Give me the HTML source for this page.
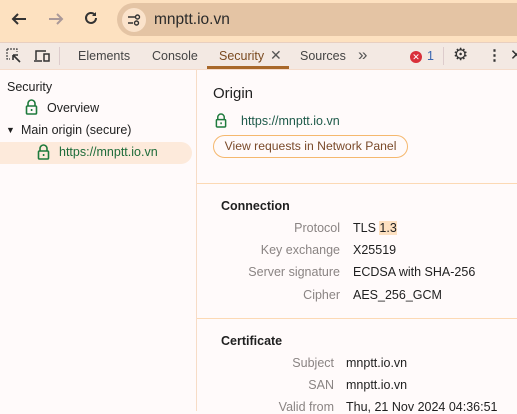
<!DOCTYPE html>
<html><head><style>
*{margin:0;padding:0;box-sizing:border-box}
body{width:517px;height:411px;overflow:hidden;font-family:"Liberation Sans",sans-serif;font-size:12.5px;color:#1f1f1f;background:#fffafa;position:relative}
.a{position:absolute;white-space:nowrap}
.top{position:absolute;left:0;top:0;width:517px;height:42px;background:#fde1c0}
.addr{position:absolute;left:117px;top:3px;width:420px;height:33px;border-radius:17px;background:#e4c4a4}
.tabs{position:absolute;left:0;top:42px;width:517px;height:28px;background:#f3e9e3;border-top:1px solid #e8cfc0;border-bottom:1px solid #f5dccb}
.lbl{color:#8a8483;text-align:right;width:140px}
.g{color:#1e6c3a}
</style></head><body>
<div class="top"></div>
<div class="addr"></div>
<svg class="a" style="left:10px;top:11px" width="18" height="16" viewBox="0 0 18 16"><path d="M16 8H3M8 3L3 8l5 5" stroke="#333" stroke-width="2" fill="none"/></svg>
<svg class="a" style="left:47px;top:11px" width="18" height="16" viewBox="0 0 18 16"><path d="M2 8h13M10 3l5 5-5 5" stroke="#a99" stroke-width="2" fill="none"/></svg>
<svg class="a" style="left:83px;top:10px" width="16" height="16" viewBox="0 0 16 16"><path d="M13 8a5 5 0 1 1-1.5-3.6" stroke="#333" stroke-width="2" fill="none"/><path d="M13 2v4h-4z" fill="#333"/></svg>
<div class="a" style="left:122px;top:8px;width:24px;height:24px;border-radius:12px;background:#fbe3cb"></div>
<svg class="a" style="left:127px;top:13px" width="14" height="14" viewBox="0 0 14 14"><path d="M1 4h7M1 10h5" stroke="#333" stroke-width="1.6"/><circle cx="10.5" cy="4" r="2" fill="none" stroke="#333" stroke-width="1.4"/><circle cx="9.5" cy="10" r="2" fill="none" stroke="#333" stroke-width="1.4"/></svg>
<div class="a" style="left:154px;top:11px;font-size:15.5px;color:#2a2a2a">mnptt.io.vn</div>
<div class="tabs"></div>
<svg class="a" style="left:6px;top:48px" width="16" height="16" viewBox="0 0 16 16"><path d="M1 1h10v3M1 1v10h3" stroke="#444" stroke-width="1.2" stroke-dasharray="2 1" fill="none"/><path d="M7 7l7 7M7 7h5M7 7v5" stroke="#333" stroke-width="1.6" fill="none"/></svg>
<svg class="a" style="left:33px;top:48px" width="18" height="16" viewBox="0 0 18 16"><path d="M3 12V3h10" stroke="#333" stroke-width="1.5" fill="none"/><path d="M1 13h8" stroke="#333" stroke-width="1.5"/><rect x="11" y="6" width="5" height="7" stroke="#333" stroke-width="1.5" fill="none"/></svg>
<div class="a" style="left:59px;top:47px;width:1px;height:18px;background:#dcc"></div>
<div class="a" style="left:78px;top:49px;color:#444">Elements</div>
<div class="a" style="left:152px;top:49px;color:#444">Console</div>
<div class="a" style="left:219px;top:49px;color:#7a4a20">Security</div>
<div class="a" style="left:270px;top:47px;font-size:14px;color:#555">✕</div>
<div class="a" style="left:207px;top:66px;width:82px;height:3px;background:#a8682a"></div>
<div class="a" style="left:300px;top:49px;color:#444">Sources</div>
<div class="a" style="left:358px;top:45px;font-size:17px;color:#555">»</div>
<div class="a" style="left:410px;top:51px;width:12px;height:12px;border-radius:6px;background:#d9303a;color:#fff;font-size:9px;line-height:12px;text-align:center">✕</div>
<div class="a" style="left:427px;top:49px;color:#3a66b0">1</div>
<div class="a" style="left:443px;top:47px;width:1px;height:18px;background:#dcc"></div>
<div class="a" style="left:453px;top:45px;font-size:17px;color:#333">⚙</div>
<div class="a" style="left:487px;top:46px;font-size:15px;color:#333;font-weight:bold">⋮</div>
<div class="a" style="left:510px;top:46px;font-size:15px;color:#333">✕</div>
<div class="a" style="left:196px;top:70px;width:1px;height:341px;background:#f7dcc6"></div>
<div class="a" style="left:7px;top:80px">Security</div>
<svg class="a" style="left:25px;top:99px" width="13" height="16" viewBox="0 0 13 16"><path d="M3 7V4.5a3.5 3.5 0 0 1 7 0V7" stroke="#1e7a3c" stroke-width="1.6" fill="none"/><rect x="1.5" y="7" width="10" height="8" rx="1" stroke="#1e7a3c" stroke-width="1.6" fill="none"/><rect x="5.8" y="10" width="1.6" height="2" fill="#1e7a3c"/></svg>
<div class="a" style="left:47px;top:101px">Overview</div>
<div class="a" style="left:6px;top:125px;font-size:9px">▼</div>
<div class="a" style="left:21px;top:123px">Main origin (secure)</div>
<div class="a" style="left:0;top:142px;width:192px;height:22px;border-radius:0 11px 11px 0;background:#fdeadb"></div>
<svg class="a" style="left:37px;top:144px" width="13" height="16" viewBox="0 0 13 16"><path d="M3 7V4.5a3.5 3.5 0 0 1 7 0V7" stroke="#1e7a3c" stroke-width="1.6" fill="none"/><rect x="1.5" y="7" width="10" height="8" rx="1" stroke="#1e7a3c" stroke-width="1.6" fill="none"/><rect x="5.8" y="10" width="1.6" height="2" fill="#1e7a3c"/></svg>
<div class="a g" style="left:59px;top:145px">https://mnptt.io.vn</div>
<div class="a" style="left:213px;top:85px;font-size:15px">Origin</div>
<svg class="a" style="left:215px;top:113px" width="12" height="15" viewBox="0 0 13 16"><path d="M3 7V4.5a3.5 3.5 0 0 1 7 0V7" stroke="#1e7a3c" stroke-width="1.6" fill="none"/><rect x="1.5" y="7" width="10" height="8" rx="1" stroke="#1e7a3c" stroke-width="1.6" fill="none"/><rect x="5.8" y="10" width="1.6" height="2" fill="#1e7a3c"/></svg>
<div class="a" style="left:241px;top:114px;color:#1e5a4a">https://mnptt.io.vn</div>
<div class="a" style="left:213px;top:135px;width:195px;height:23px;border:1px solid #f5b86e;border-radius:12px;color:#7a4a2a;font-size:12.2px;line-height:21px;text-align:center">View requests in Network Panel</div>
<div class="a" style="left:197px;top:183px;width:320px;height:1px;background:#fcd9b4"></div>
<div class="a" style="left:221px;top:199px;font-weight:bold">Connection</div>
<div class="a lbl" style="left:200px;top:221px">Protocol</div>
<div class="a" style="left:353px;top:221px">TLS <span style="background:#fde0c0">1.3</span></div>
<div class="a lbl" style="left:200px;top:243px">Key exchange</div><div class="a" style="left:353px;top:243px">X25519</div>
<div class="a lbl" style="left:200px;top:265px">Server signature</div><div class="a" style="left:353px;top:265px">ECDSA with SHA-256</div>
<div class="a lbl" style="left:200px;top:288px">Cipher</div><div class="a" style="left:353px;top:288px">AES_256_GCM</div>
<div class="a" style="left:197px;top:318px;width:320px;height:1px;background:#fcd9b4"></div>
<div class="a" style="left:221px;top:334px;font-weight:bold">Certificate</div>
<div class="a lbl" style="left:194px;top:356px">Subject</div><div class="a" style="left:346px;top:356px">mnptt.io.vn</div>
<div class="a lbl" style="left:194px;top:378px">SAN</div><div class="a" style="left:346px;top:378px">mnptt.io.vn</div>
<div class="a lbl" style="left:194px;top:400px">Valid from</div><div class="a" style="left:346px;top:400px">Thu, 21 Nov 2024 04:36:51</div>
</body></html>
